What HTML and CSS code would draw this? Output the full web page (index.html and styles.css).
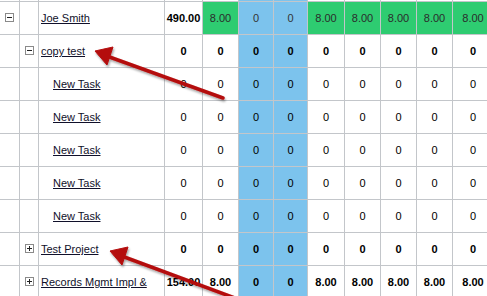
FILE: index.html
```html
<!DOCTYPE html>
<html>
<head>
<meta charset="utf-8">
<link rel="stylesheet" href="styles.css">
</head>
<body>
<div class="wrap">
  <div class="grid">
    <!-- cut-off row above -->
    <div class="c"></div><div class="c"></div><div class="c"></div><div class="c"></div><div class="c"></div><div class="c blue"></div><div class="c blue"></div><div class="c"></div><div class="c"></div><div class="c"></div><div class="c"></div><div class="c"></div>

    <!-- Joe Smith -->
    <div class="c ic"><span class="tog minus"></span></div><div class="c"></div>
    <div class="c name"><a href="#">Joe Smith</a></div>
    <div class="c num b">490.00</div>
    <div class="c num green">8.00</div>
    <div class="c num blue grey">0</div><div class="c num blue grey">0</div>
    <div class="c num green">8.00</div><div class="c num green">8.00</div><div class="c num green">8.00</div><div class="c num green">8.00</div><div class="c num green">8.00</div>

    <!-- copy test -->
    <div class="c"></div><div class="c ic"><span class="tog minus"></span></div>
    <div class="c name"><a href="#">copy test</a></div>
    <div class="c num b">0</div><div class="c num b">0</div>
    <div class="c num blue b">0</div><div class="c num blue b">0</div>
    <div class="c num b">0</div><div class="c num b">0</div><div class="c num b">0</div><div class="c num b">0</div><div class="c num b">0</div>

    <!-- New Task x5 -->
    <div class="c"></div><div class="c"></div>
    <div class="c name task"><a href="#">New Task</a></div>
    <div class="c num">0</div><div class="c num">0</div>
    <div class="c num blue">0</div><div class="c num blue">0</div>
    <div class="c num">0</div><div class="c num">0</div><div class="c num">0</div><div class="c num">0</div><div class="c num">0</div>

    <div class="c"></div><div class="c"></div>
    <div class="c name task"><a href="#">New Task</a></div>
    <div class="c num">0</div><div class="c num">0</div>
    <div class="c num blue">0</div><div class="c num blue">0</div>
    <div class="c num">0</div><div class="c num">0</div><div class="c num">0</div><div class="c num">0</div><div class="c num">0</div>

    <div class="c"></div><div class="c"></div>
    <div class="c name task"><a href="#">New Task</a></div>
    <div class="c num">0</div><div class="c num">0</div>
    <div class="c num blue">0</div><div class="c num blue">0</div>
    <div class="c num">0</div><div class="c num">0</div><div class="c num">0</div><div class="c num">0</div><div class="c num">0</div>

    <div class="c"></div><div class="c"></div>
    <div class="c name task"><a href="#">New Task</a></div>
    <div class="c num">0</div><div class="c num">0</div>
    <div class="c num blue">0</div><div class="c num blue">0</div>
    <div class="c num">0</div><div class="c num">0</div><div class="c num">0</div><div class="c num">0</div><div class="c num">0</div>

    <div class="c"></div><div class="c"></div>
    <div class="c name task"><a href="#">New Task</a></div>
    <div class="c num">0</div><div class="c num">0</div>
    <div class="c num blue">0</div><div class="c num blue">0</div>
    <div class="c num">0</div><div class="c num">0</div><div class="c num">0</div><div class="c num">0</div><div class="c num">0</div>

    <!-- Test Project -->
    <div class="c"></div><div class="c ic"><span class="tog plus"></span></div>
    <div class="c name"><a href="#">Test Project</a></div>
    <div class="c num b">0</div><div class="c num b">0</div>
    <div class="c num blue b">0</div><div class="c num blue b">0</div>
    <div class="c num b">0</div><div class="c num b">0</div><div class="c num b">0</div><div class="c num b">0</div><div class="c num b">0</div>

    <!-- Records -->
    <div class="c"></div><div class="c ic"><span class="tog plus"></span></div>
    <div class="c name"><a href="#">Records Mgmt Impl &amp;</a></div>
    <div class="c num b">154.00</div><div class="c num b">8.00</div>
    <div class="c num blue b">0</div><div class="c num blue b">0</div>
    <div class="c num b">8.00</div><div class="c num b">8.00</div><div class="c num b">8.00</div><div class="c num b">8.00</div><div class="c num b">8.00</div>
  </div>

  <svg class="arrows" width="487" height="296" viewBox="0 0 487 296">
    <defs>
      <filter id="sh" x="-20%" y="-50%" width="140%" height="200%">
        <feDropShadow dx="1" dy="2" stdDeviation="1.2" flood-color="#000" flood-opacity="0.35"/>
      </filter>
    </defs>
    <g filter="url(#sh)" fill="#b40a0a" stroke="#b40a0a">
      <line x1="223" y1="98" x2="104" y2="55" stroke-width="3.5" stroke-linecap="round"/>
      <polygon points="95,51 113,47 107,65" stroke-width="1" stroke-linejoin="round"/>
      <line x1="240" y1="300" x2="119" y2="255" stroke-width="3.5" stroke-linecap="round"/>
      <polygon points="110,251 128,247 122,265" stroke-width="1" stroke-linejoin="round"/>
    </g>
  </svg>
</div>
</body>
</html>
```

FILE: styles.css
```css
html, body {
  margin: 0;
  padding: 0;
  background: #fff;
  overflow: hidden;
}

.wrap {
  position: relative;
  width: 487px;
  height: 296px;
  overflow: hidden;
}

.grid {
  display: grid;
  grid-template-columns: 19px 18px 125px 37px 35px 34px 33px 36px 35px 35px 35px 40px;
  grid-template-rows: 1px repeat(9, 32px);
  gap: 1px;
  background: #c3c6ca;
  width: 500px;
  font-family: "Liberation Sans", Arial, sans-serif;
  font-size: 11px;
  color: #000;
}

.c {
  background: #fff;
  display: flex;
  align-items: center;
  overflow: hidden;
  white-space: nowrap;
}

.num {
  justify-content: center;
}

.b {
  font-weight: bold;
}

.green {
  background: #2ecc71;
  color: #2b2b2b;
}

.blue {
  background: #7cc3ed;
}

.grey {
  color: #333;
}

.name {
  padding-left: 2px;
}

.name.task {
  padding-left: 14px;
}

.name a {
  color: #10102a;
  text-decoration: underline;
}

.ic {
  justify-content: center;
}

.tog {
  position: relative;
  width: 7px;
  height: 7px;
  border: 1px solid #8a8a8a;
  background: #fff;
  margin-bottom: 2px;
}

.tog::before {
  content: "";
  position: absolute;
  left: 1px;
  top: 3px;
  width: 5px;
  height: 1px;
  background: #222;
}

.tog.plus::after {
  content: "";
  position: absolute;
  left: 3px;
  top: 1px;
  width: 1px;
  height: 5px;
  background: #222;
}

.arrows {
  position: absolute;
  left: 0;
  top: 0;
  pointer-events: none;
}
```
